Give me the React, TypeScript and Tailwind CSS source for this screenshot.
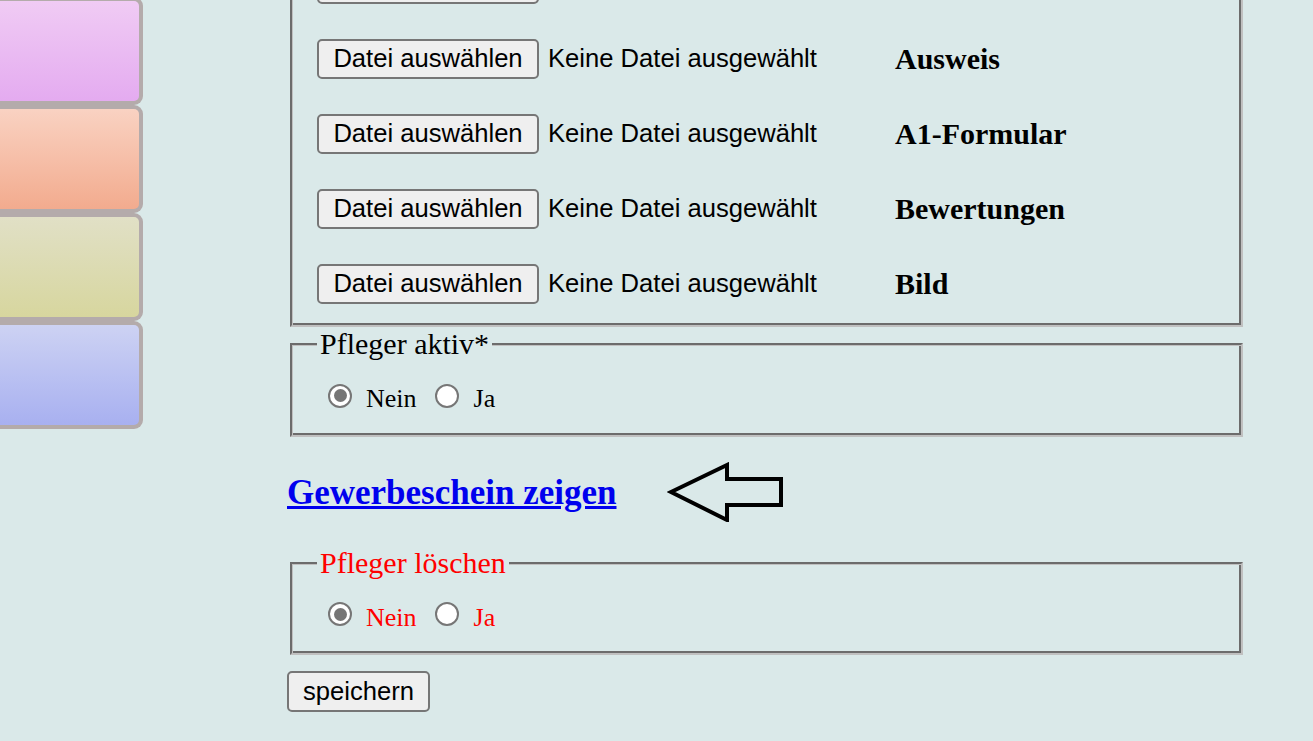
import React from "react";

const serif = "font-['Liberation_Serif','Times_New_Roman',serif]";
const sans = "font-['Liberation_Sans',Arial,sans-serif]";
const groove =
  "border-2 border-t-[#6c6c6c] border-l-[#6c6c6c] border-r-[#c0c0c0] border-b-[#c0c0c0] shadow-[inset_1px_1px_0_#c0c0c0,inset_-2px_-2px_0_#6c6c6c]";

function FileRow({ label }: { label: string }) {
  return (
    <div className="flex h-[75px] items-center">
      <button
        className={`${sans} h-[40px] w-[222px] rounded-[5px] border-2 border-[#767676] bg-[#efefef] text-[25.6px] leading-none text-black`}
      >
        Datei auswählen
      </button>
      <span className={`${sans} ml-[9px] w-[347px] text-[25.6px] text-black`}>Keine Datei ausgewählt</span>
      <b className={`${serif} text-[30px] text-black`}>{label}</b>
    </div>
  );
}

function Radio({ checked }: { checked?: boolean }) {
  return (
    <span className="flex h-[24px] w-[24px] items-center justify-center rounded-full border-2 border-[#767676] bg-white">
      {checked && <span className="h-[13px] w-[13px] rounded-full bg-[#767676]" />}
    </span>
  );
}

function RadioFieldset({ legend, red }: { legend: string; red?: boolean }) {
  const color = red ? "text-[#ff0000]" : "text-black";
  return (
    <fieldset className={`mx-[3px] px-[25px] pb-[25px] ${groove}`}>
      <legend className={`${serif} bg-[#dae9e9] px-[3px] text-[30px] leading-[34.5px] ${color}`}>{legend}</legend>
      <div className={`${serif} mt-[20px] flex h-[28px] items-center text-[26px] leading-[28px] ${color}`}>
        <span className="ml-[11px]">
          <Radio checked />
        </span>
        <span className="ml-[14px] pt-[7px]">Nein</span>
        <span className="ml-[18px]">
          <Radio />
        </span>
        <span className="ml-[15px] pt-[7px]">Ja</span>
      </div>
    </fieldset>
  );
}

const boxes = [
  "bg-gradient-to-b from-[#f0cbf4] to-[#e4abf0]",
  "bg-gradient-to-b from-[#f9d2c2] to-[#f2ab8e]",
  "bg-gradient-to-b from-[#e1e0c6] to-[#d7d69e]",
  "bg-gradient-to-b from-[#cdd2f3] to-[#a8b0f0]",
];

export default function App() {
  return (
    <div className="flex h-[741px] w-[1313px] overflow-hidden bg-[#dae9e9]">
      <div className="-mt-[3px] flex w-[143px] shrink-0 flex-col">
        {boxes.map((b, i) => (
          <div key={i} className={`h-[108px] rounded-r-[9px] border-[4px] border-l-0 border-[#b4abab] ${b}`} />
        ))}
      </div>
      <div className="-mt-[58px] ml-[144px] flex w-[959px] shrink-0 flex-col">
        <fieldset className={`mx-[3px] px-[25px] pt-[2px] pb-[4px] ${groove}`}>
          <FileRow label="Gewerbeschein" />
          <FileRow label="Ausweis" />
          <FileRow label="A1-Formular" />
          <FileRow label="Bewertungen" />
          <FileRow label="Bild" />
        </fieldset>
        <RadioFieldset legend="Pfleger aktiv*" />
        <div className="mt-[33px] flex h-[45px] items-center">
          <a href="#" className={`${serif} text-[35px] font-bold leading-[45px] text-[#0000ee] underline`}>
            Gewerbeschein zeigen
          </a>
          <svg width="116" height="60" viewBox="0 0 116 60" className="ml-[50px]">
            <polygon
              points="4,30 60,3 60,17 114,17 114,43 60,43 60,58"
              fill="none"
              stroke="black"
              strokeWidth="4"
              strokeLinejoin="miter"
            />
          </svg>
        </div>
        <div className="mt-[31px]">
          <RadioFieldset legend="Pfleger löschen" red />
        </div>
        <div className="mt-[16px]">
          <button
            className={`${sans} h-[41px] w-[143px] rounded-[5px] border-2 border-[#767676] bg-[#efefef] text-[25.6px] leading-none text-black`}
          >
            speichern
          </button>
        </div>
      </div>
    </div>
  );
}
